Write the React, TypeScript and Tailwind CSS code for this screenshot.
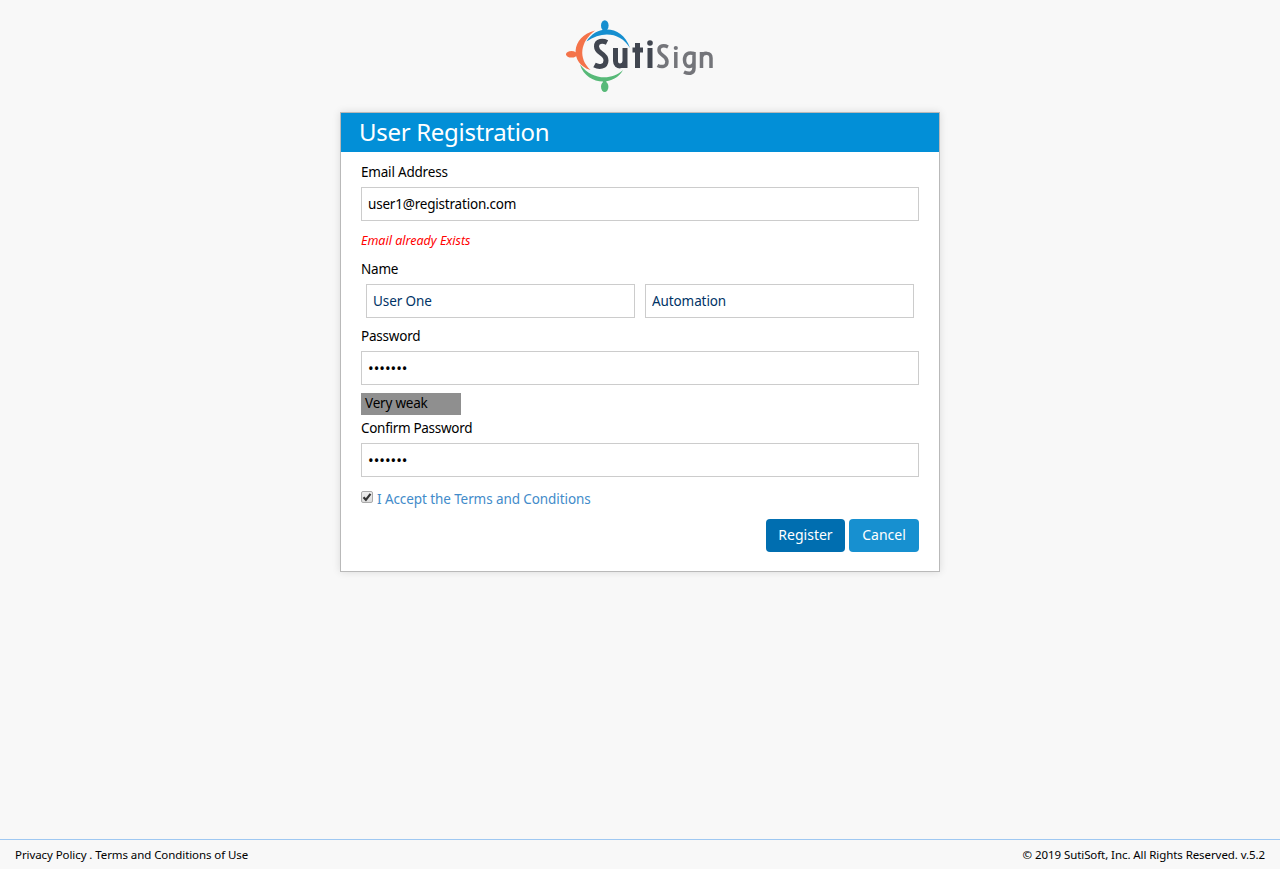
import React from "react";

function Logo() {
  return (
    <svg width="160" height="80" viewBox="0 0 160 80" role="img" aria-label="SutiSign" className="block">
      <path d="M26.500 26.500C36 10 62 9 70 33C61 18 43 15 26.500 26.500Z" fill="#168fd0" />
      <ellipse cx="44.800" cy="10.500" rx="3.800" ry="5.300" fill="#168fd0" />
      <path d="M43.500 14h2.600l1.400 4h-5.400z" fill="#168fd0" />
      <path d="M35 15.500C10 22 10 49 30.500 55C18 43 20 27 35 15.500Z" fill="#f4734a" />
      <ellipse cx="11.500" cy="39.300" rx="5.500" ry="3.300" fill="#f4734a" />
      <path d="M15.500 38l4-1.500v5.500l-4-1.500z" fill="#f4734a" />
      <path d="M20 49.500C26 70 54 72 63 55C51 66 32 65 20 49.500Z" fill="#57b978" />
      <ellipse cx="44.700" cy="71.800" rx="3.700" ry="5.200" fill="#57b978" />
      <path d="M42.200 64h5l-1.400 4h-2.400z" fill="#57b978" />
      <g fill="none" stroke="#414650" strokeWidth="5">
        <path d="M47 27.500C43 25.500 36.500 25.500 36.500 31.500C36.500 39 46 37.500 46 45.500C46 52 39 52.500 34.500 50" />
        <path d="M55.500 33V46C55.500 53 65 52 65 46V33M65 44V53" />
        <path d="M77.500 28V53M72.500 35H83" />
        <path d="M90 33V53" />
      </g>
      <circle cx="90" cy="28" r="2.800" fill="#414650" />
      <g fill="none" stroke="#74757a" strokeWidth="3.500">
        <path d="M108 32C104 30 99 30.500 99 35C99 41 107 40 107 46.500C107 52 101.500 52.500 97.500 50.500" />
        <path d="M115.800 37V53" />
        <path d="M134 38.500C128 37 124.500 39 124.500 45C124.500 54 134 53 134 46M134 37V53C134 59.500 128 59 124 57" />
        <path d="M141.500 53V37M141.500 42C143 37 151 37 151 43V53" />
      </g>
      <circle cx="115.800" cy="33" r="2.100" fill="#74757a" />
    </svg>
  );
}

const field = "block h-[34px] w-full border border-[#ccc] bg-white px-1.5 outline-none";

export default function App() {
  return (
    <div className="flex h-[869px] flex-col bg-[#f8f8f8] font-['Noto_Sans','Open_Sans',sans-serif] text-[13.500px] leading-5 tracking-[-0.200px] text-black">
      <header className="flex h-[112px] justify-center pt-[15px]">
        <Logo />
      </header>
      <main className="mx-auto h-[460px] w-[600px] border border-[#b9b9b9] bg-white shadow-[0_0_8px_rgba(0,0,0,0.12)]">
        <h1 className="h-[39px] bg-[#028fd7] pl-[18px] text-2xl leading-[37px] tracking-[-0.300px] text-white">
          User Registration
        </h1>
        <form className="px-5 pt-[10px]" onSubmit={(e) => e.preventDefault()}>
          <label className="block h-[25px]">Email Address</label>
          <input className={field} defaultValue="user1@registration.com" />
          <p className="mt-2.5 h-[28px] text-[12.500px] leading-5 tracking-normal text-[#f00] italic">Email already Exists</p>
          <label className="block h-[25px]">Name</label>
          <div className="flex gap-2.5 px-[5px] tracking-[-0.100px] text-[#003366]">
            <input className={field} defaultValue="User One" />
            <input className={field} defaultValue="Automation" />
          </div>
          <label className="mt-2 block h-[25px]">Password</label>
          <input type="password" className={`${field} text-[15px] tracking-normal`} defaultValue="abcdefg" />
          <div className="mt-2 h-[22px] w-[100px] bg-[#8f8f8f] pl-1 leading-[21px]">Very weak</div>
          <label className="mt-[3px] block h-[25px] tracking-[-0.300px]">Confirm Password</label>
          <input type="password" className={`${field} text-[15px] tracking-normal`} defaultValue="abcdefg" />
          <div className="mt-[12px] flex h-5">
            <span className="mt-0.5 mr-1 block h-3 w-3 rounded-xs border border-[#aaa] bg-linear-to-b from-[#eee] to-[#ddd]">
              <svg viewBox="0 0 10 10" className="block h-2.5 w-2.5"><path d="M1.500 5.300L3.900 7.800L8.500 1.800" fill="none" stroke="#333" strokeWidth="2.200" /></svg>
            </span>
            <span className="tracking-[-0.090px] text-[#428bca]">I Accept the Terms and Conditions</span>
          </div>
          <div className="mt-[10px] flex justify-end gap-1 text-sm tracking-normal text-white">
            <button className="h-[33px] w-[79px] rounded bg-[#006eb0] pb-0.5">Register</button>
            <button className="h-[33px] w-[70px] rounded bg-[#1790d0] pb-0.5">Cancel</button>
          </div>
        </form>
      </main>
      <footer className="mt-auto flex h-[30px] justify-between border-t border-[#9fc8f2] px-[15px] text-[11.500px] leading-[30px] tracking-[-0.080px]">
        <span>Privacy Policy . Terms and Conditions of Use</span>
        <span>© 2019 SutiSoft, Inc. All Rights Reserved. v.5.2</span>
      </footer>
    </div>
  );
}
